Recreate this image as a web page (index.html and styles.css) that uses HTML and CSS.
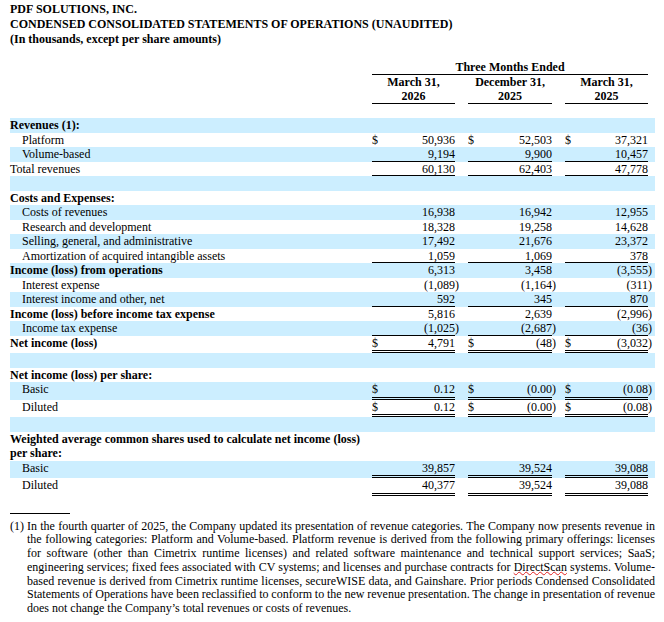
FILE: index.html
```html
<!DOCTYPE html>
<html lang="en">
<head>
    <meta charset="UTF-8">
    <title>PDF Solutions - Condensed Consolidated Statements of Operations</title>
    <link rel="stylesheet" href="styles.css">
</head>
<body>
    <div class="report">
        <!-- 标题 -->
        <div class="report-title">
            <div>PDF SOLUTIONS, INC.</div>
            <div>CONDENSED CONSOLIDATED STATEMENTS OF OPERATIONS (UNAUDITED)</div>
            <div>(In thousands, except per share amounts)</div>
        </div>

        <table class="ops">
            <colgroup>
                <col class="c-label"><col class="c-gap">
                <col class="c-cur"><col class="c-num"><col class="c-sep">
                <col class="c-cur"><col class="c-num2"><col class="c-sep">
                <col class="c-cur"><col class="c-num"><col class="c-gap">
            </colgroup>
            <thead>
                <tr>
                    <th colspan="2"></th>
                    <th colspan="8" class="u">Three Months Ended</th>
                    <th></th>
                </tr>
                <tr>
                    <th colspan="2"></th>
                    <th colspan="2" class="u">March 31,<br>2026</th>
                    <th></th>
                    <th colspan="2" class="u">December 31,<br>2025</th>
                    <th></th>
                    <th colspan="2" class="u">March 31,<br>2025</th>
                    <th></th>
                </tr>
                <tr class="spacer"><th colspan="11"></th></tr>
            </thead>
            <tbody>
                <tr class="shade">
                    <td class="lbl head" colspan="2">Revenues (1):</td>
                    <td></td><td></td><td></td><td></td><td></td><td></td><td></td><td></td><td></td>
                </tr>
                <tr>
                    <td class="lbl sub" colspan="2">Platform</td>
                    <td class="cur">$</td><td class="num">50,936</td><td></td>
                    <td class="cur">$</td><td class="num">52,503</td><td></td>
                    <td class="cur">$</td><td class="num">37,321</td><td></td>
                </tr>
                <tr class="shade">
                    <td class="lbl sub" colspan="2">Volume-based</td>
                    <td class="u"></td><td class="num u">9,194</td><td></td>
                    <td class="u"></td><td class="num u">9,900</td><td></td>
                    <td class="u"></td><td class="num u">10,457</td><td></td>
                </tr>
                <tr>
                    <td class="lbl" colspan="2">Total revenues</td>
                    <td class="u"></td><td class="num u">60,130</td><td></td>
                    <td class="u"></td><td class="num u">62,403</td><td></td>
                    <td class="u"></td><td class="num u">47,778</td><td></td>
                </tr>
                <tr class="shade"><td colspan="11"></td></tr>

                <tr>
                    <td class="lbl head" colspan="2">Costs and Expenses:</td>
                    <td></td><td></td><td></td><td></td><td></td><td></td><td></td><td></td><td></td>
                </tr>
                <tr class="shade">
                    <td class="lbl sub" colspan="2">Costs of revenues</td>
                    <td></td><td class="num">16,938</td><td></td>
                    <td></td><td class="num">16,942</td><td></td>
                    <td></td><td class="num">12,955</td><td></td>
                </tr>
                <tr>
                    <td class="lbl sub" colspan="2">Research and development</td>
                    <td></td><td class="num">18,328</td><td></td>
                    <td></td><td class="num">19,258</td><td></td>
                    <td></td><td class="num">14,628</td><td></td>
                </tr>
                <tr class="shade">
                    <td class="lbl sub" colspan="2">Selling, general, and administrative</td>
                    <td></td><td class="num">17,492</td><td></td>
                    <td></td><td class="num">21,676</td><td></td>
                    <td></td><td class="num">23,372</td><td></td>
                </tr>
                <tr>
                    <td class="lbl sub" colspan="2">Amortization of acquired intangible assets</td>
                    <td class="u"></td><td class="num u">1,059</td><td></td>
                    <td class="u"></td><td class="num u">1,069</td><td></td>
                    <td class="u"></td><td class="num u">378</td><td></td>
                </tr>
                <tr class="shade">
                    <td class="lbl head" colspan="2">Income (loss) from operations</td>
                    <td></td><td class="num">6,313</td><td></td>
                    <td></td><td class="num">3,458</td><td></td>
                    <td></td><td class="num">(3,555<span class="rp">)</span></td><td></td>
                </tr>
                <tr>
                    <td class="lbl sub" colspan="2">Interest expense</td>
                    <td></td><td class="num">(1,089<span class="rp">)</span></td><td></td>
                    <td></td><td class="num">(1,164<span class="rp">)</span></td><td></td>
                    <td></td><td class="num">(311<span class="rp">)</span></td><td></td>
                </tr>
                <tr class="shade">
                    <td class="lbl sub" colspan="2">Interest income and other, net</td>
                    <td class="u"></td><td class="num u">592</td><td></td>
                    <td class="u"></td><td class="num u">345</td><td></td>
                    <td class="u"></td><td class="num u">870</td><td></td>
                </tr>
                <tr>
                    <td class="lbl head" colspan="2">Income (loss) before income tax expense</td>
                    <td></td><td class="num">5,816</td><td></td>
                    <td></td><td class="num">2,639</td><td></td>
                    <td></td><td class="num">(2,996<span class="rp">)</span></td><td></td>
                </tr>
                <tr class="shade">
                    <td class="lbl sub" colspan="2">Income tax expense</td>
                    <td class="u"></td><td class="num u">(1,025<span class="rp">)</span></td><td></td>
                    <td class="u"></td><td class="num u">(2,687<span class="rp">)</span></td><td></td>
                    <td class="u"></td><td class="num u">(36<span class="rp">)</span></td><td></td>
                </tr>
                <tr class="total">
                    <td class="lbl head" colspan="2">Net income (loss)</td>
                    <td class="cur uu">$</td><td class="num uu">4,791</td><td></td>
                    <td class="cur uu">$</td><td class="num uu">(48<span class="rp">)</span></td><td></td>
                    <td class="cur uu">$</td><td class="num uu">(3,032<span class="rp">)</span></td><td></td>
                </tr>
                <tr class="shade"><td colspan="11"></td></tr>

                <tr>
                    <td class="lbl head" colspan="2">Net income (loss) per share:</td>
                    <td></td><td></td><td></td><td></td><td></td><td></td><td></td><td></td><td></td>
                </tr>
                <tr class="shade total">
                    <td class="lbl sub" colspan="2">Basic</td>
                    <td class="cur uu">$</td><td class="num uu">0.12</td><td></td>
                    <td class="cur uu">$</td><td class="num uu">(0.00<span class="rp">)</span></td><td></td>
                    <td class="cur uu">$</td><td class="num uu">(0.08<span class="rp">)</span></td><td></td>
                </tr>
                <tr class="total">
                    <td class="lbl sub" colspan="2">Diluted</td>
                    <td class="cur uu">$</td><td class="num uu">0.12</td><td></td>
                    <td class="cur uu">$</td><td class="num uu">(0.00<span class="rp">)</span></td><td></td>
                    <td class="cur uu">$</td><td class="num uu">(0.08<span class="rp">)</span></td><td></td>
                </tr>
                <tr class="shade"><td colspan="11"></td></tr>

                <tr>
                    <td class="lbl head wide" colspan="11">Weighted average common shares used to calculate net income (loss)<br>per share:</td>
                </tr>
                <tr class="shade total">
                    <td class="lbl sub" colspan="2">Basic</td>
                    <td class="uu"></td><td class="num uu">39,857</td><td></td>
                    <td class="uu"></td><td class="num uu">39,524</td><td></td>
                    <td class="uu"></td><td class="num uu">39,088</td><td></td>
                </tr>
                <tr class="total">
                    <td class="lbl sub" colspan="2">Diluted</td>
                    <td class="uu"></td><td class="num uu">40,377</td><td></td>
                    <td class="uu"></td><td class="num uu">39,524</td><td></td>
                    <td class="uu"></td><td class="num uu">39,088</td><td></td>
                </tr>
            </tbody>
        </table>

        <!-- 脚注 -->
        <div class="footnote-rule"></div>
        <div class="footnote">
            <div class="fn-mark">(1)</div>
            <div class="fn-text">
                <span class="fn-line">In the fourth quarter of 2025, the Company updated its presentation of revenue categories. The Company now presents revenue in</span>
                <span class="fn-line">the following categories: Platform and Volume-based. Platform revenue is derived from the following primary offerings: licenses</span>
                <span class="fn-line">for software (other than Cimetrix runtime licenses) and related software maintenance and technical support services; SaaS;</span>
                <span class="fn-line">engineering services; fixed fees associated with CV systems; and licenses and purchase contracts for <span class="spell">DirectScan</span> systems. Volume-</span>
                <span class="fn-line">based revenue is derived from Cimetrix runtime licenses, secureWISE data, and Gainshare. Prior periods Condensed Consolidated</span>
                <span class="fn-line">Statements of Operations have been reclassified to conform to the new revenue presentation. The change in presentation of revenue</span>
                <span class="fn-line last">does not change the Company’s total revenues or costs of revenues.</span>
            </div>
        </div>
    </div>
</body>
</html>
```

FILE: styles.css
```css
body {
    margin: 0;
    padding: 0;
    background-color: #fff;
    color: #000;
    font-family: "Liberation Serif", "Times New Roman", serif;
    font-size: 12px;
}
.report {
    padding: 2px 9px 0 10px;
}
/* 标题 */
.report-title {
    font-weight: bold;
    line-height: 15px;
}
/* 表格 */
.ops {
    margin-top: 13px;
    width: 645px;
    table-layout: fixed;
    border-collapse: separate;
    border-spacing: 0;
}
.c-label { width: 355px; }
.c-gap { width: 7px; }
.c-cur { width: 12px; }
.c-num { width: 71px; }
.c-num2 { width: 72px; }
.c-sep { width: 13px; }
.ops th,
.ops td {
    padding: 0;
    line-height: 14.5px;
    height: 14.5px;
    white-space: nowrap;
}
.ops th {
    font-weight: bold;
    text-align: center;
}
.ops .spacer th {
    height: 14.5px;
}
.shade {
    background-color: #cceeff;
}
.lbl {
    text-align: left;
}
.lbl.head {
    font-weight: bold;
}
.lbl.sub {
    padding-left: 12px;
}
.cur {
    text-align: left;
}
.num {
    text-align: right;
}
.rp {
    margin-right: -4px;
}
/* 下划线：单线和双线 */
.u {
    background-image: linear-gradient(#000, #000);
    background-size: 100% 1px;
    background-position: 0 100%;
    background-repeat: no-repeat;
}
.uu {
    background-image: linear-gradient(#000, #000), linear-gradient(#000, #000);
    background-size: 100% 1px, 100% 1px;
    background-position: 0 100%, 0 calc(100% - 2px);
    background-repeat: no-repeat;
}
.total td {
    padding-bottom: 3px;
}
/* 脚注 */
.footnote-rule {
    width: 60px;
    margin-top: 17px;
    border-top: 1px solid #000;
}
.footnote {
    display: flex;
    margin-top: 6px;
    font-size: 12px;
    line-height: 13.8px;
}
.fn-mark {
    width: 17px;
    flex-shrink: 0;
}
.fn-text {
    flex: 1;
}
.fn-line {
    display: block;
    text-align: justify;
    text-align-last: justify;
    word-spacing: -1px;
}
.fn-line.last {
    text-align-last: left;
    word-spacing: 0;
}
.spell {
    text-decoration: underline wavy #e02020;
    text-decoration-thickness: 1px;
    text-underline-offset: 0;
}
```
